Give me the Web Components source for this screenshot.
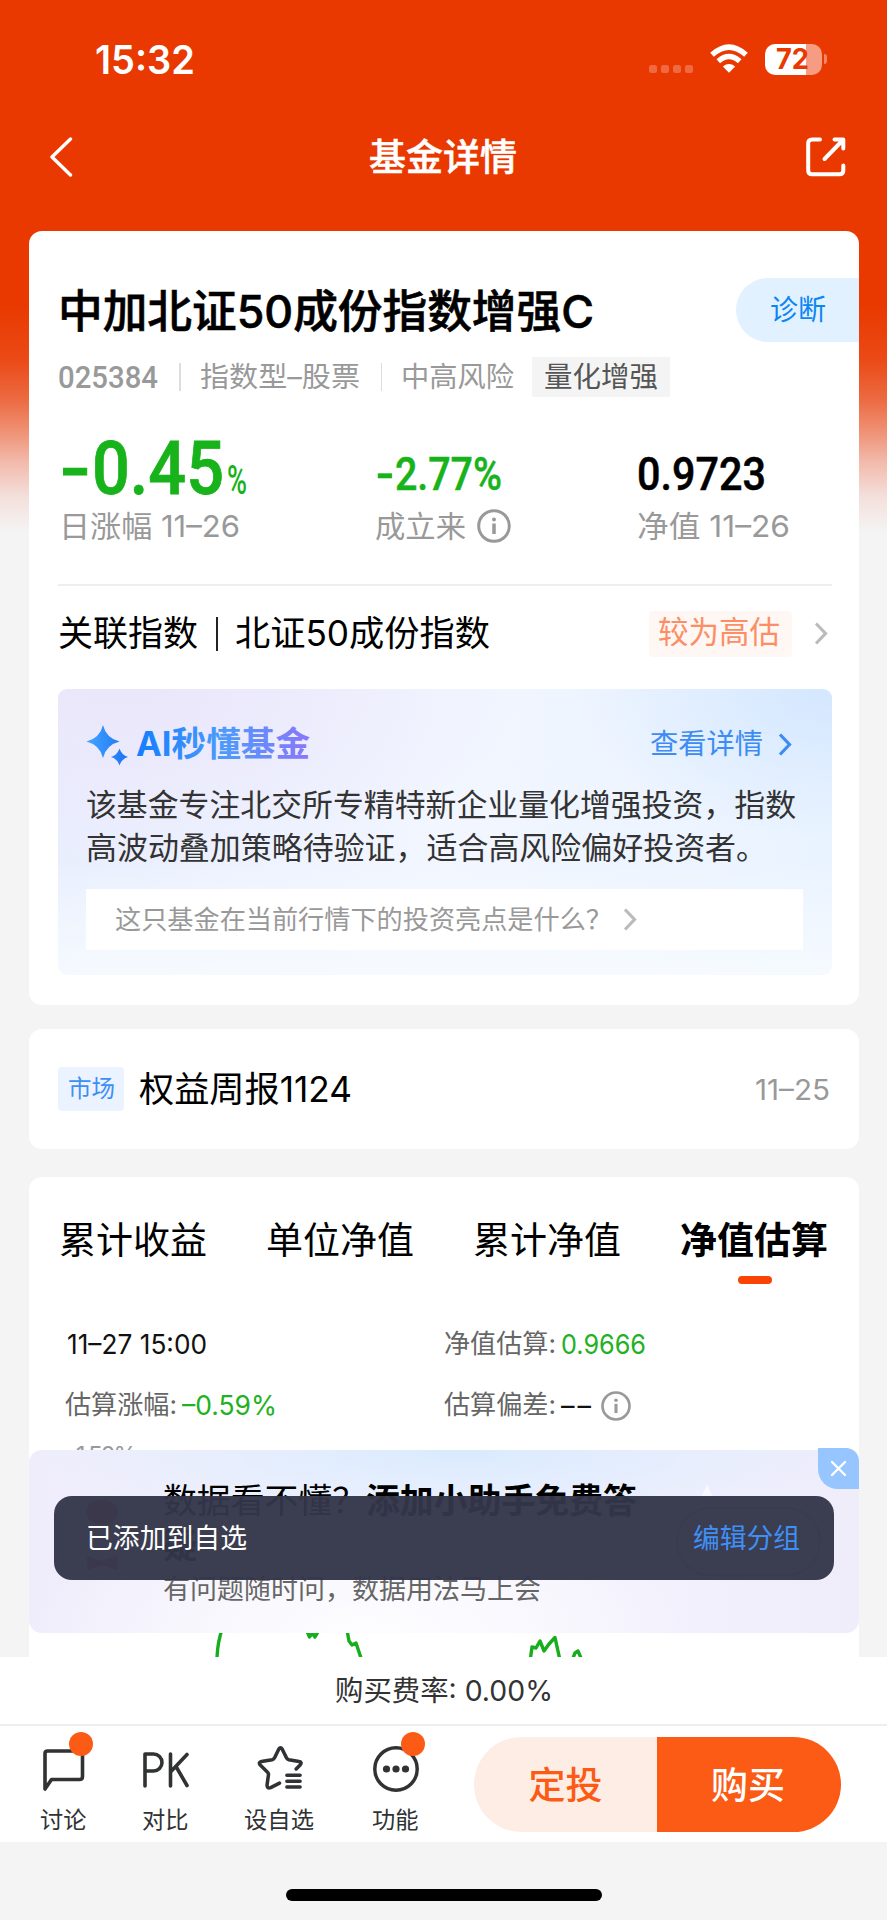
<!DOCTYPE html>
<html lang="zh-CN">
<head>
<meta charset="utf-8">
<title>基金详情</title>
<style>
html,body{margin:0;padding:0}
body{width:887px;height:1920px;overflow:hidden;background:#f4f4f4;color:#000;font-family:Inter,"Noto Sans CJK SC",sans-serif}
</style>
</head>
<body>
<fund-app></fund-app>
<script>
const define = (name, html, setup) => {
  const t = document.createElement('template');
  t.innerHTML = html;
  customElements.define(name, class extends HTMLElement {
    constructor() {
      super();
      this.attachShadow({mode: 'open'}).appendChild(t.content.cloneNode(true));
    }
    connectedCallback() { if (setup) setup(this); }
  });
};

/* Single-line label: s = size, w = advance width, g = weight, c = colour. */
define('fit-text', `<style>
:host{display:block;flex:none;white-space:nowrap;line-height:1}
span{display:inline-block;transform-origin:0 50%;vertical-align:top}
</style><span><slot></slot></span>`, el => {
  const a = n => el.getAttribute(n);
  const span = el.shadowRoot.querySelector('span');
  el.style.fontSize = a('s') + 'px';
  el.style.width = a('w') + 'px';
  if (a('g')) el.style.fontWeight = a('g');
  if (a('c')) el.style.color = a('c');
  span.style.transform = 'none';
  const natural = span.getBoundingClientRect().width;
  if (natural) span.style.transform = `scaleX(${a('w') / natural})`;
});

define('info-icon', `<style>:host{display:block;flex:none;width:34px;height:34px}svg{display:block;width:100%;height:100%}</style>
<svg viewBox="0 0 34 34"><circle cx="17" cy="17" r="15.300" fill="none" stroke="#999" stroke-width="3"/><circle cx="17" cy="10.500" r="2" fill="#999"/><path d="M17 14.500V25" stroke="#999" stroke-width="3.500"/></svg>`);

define('chevron-right', `<style>:host{display:block;flex:none;width:14px;height:23px}svg{display:block;width:100%;height:100%}</style>
<svg viewBox="0 0 14 23" fill="none" stroke="currentColor" stroke-width="3.200"><path d="M2 1.500 11.500 11.500 2 21.500"/></svg>`);

define('status-bar', `<style>
:host{display:flex;height:118px;box-sizing:border-box;padding-left:95px;align-items:center;color:#fff}
svg{display:block;flex:none}
.bat{display:flex;align-items:center;position:relative;margin-left:17px}
.body{width:57px;height:31px;border-radius:10px;background:linear-gradient(90deg,#fff 41px,#f59c82 41px);display:flex;align-items:center;padding-left:11px;box-sizing:border-box}
.cap{width:3px;height:10px;border-radius:0 4px 4px 0;background:#f28768;margin-left:2px}
</style>
<fit-text s="39" w="100" g="600">15:32</fit-text>
<svg style="margin:20px 0 0 454px" width="44" height="8" fill="#f06a41"><rect width="8" height="8" rx="2.5"/><rect x="12" width="8" height="8" rx="2.5"/><rect x="24" width="8" height="8" rx="2.5"/><rect x="36" width="8" height="8" rx="2.5"/></svg>
<svg style="margin-left:17px;margin-top:-1px" width="38" height="29" viewBox="0 0 38 29" fill="none" stroke="#fff" stroke-width="5.4"><path d="M2 10.8Q19-4.6 36 10.8"/><path d="M8.3 17.2Q19 7.8 29.7 17.2"/><path d="M12.8 22.4Q19 17.6 25.2 22.4L19 28.8Z" fill="#fff" stroke="none"/></svg>
<div class="bat"><div class="body"><fit-text s="28" w="33" g="700" c="#e93900">72</fit-text></div><div class="cap"></div></div>`);

define('nav-bar', `<style>
:host{display:flex;height:78px;align-items:center;justify-content:space-between;padding:0 41px 0 49px;color:#fff}
svg{display:block}
</style>
<svg width="25" height="40" viewBox="0 0 25 40" fill="none" stroke="#fff" stroke-width="3.4" stroke-linecap="round" stroke-linejoin="round"><path d="M21.5 2 3 20 21.5 38"/></svg>
<fit-text s="37" w="148" g="500" style="margin-left:6px;-webkit-text-stroke:.5px #fff">基金详情</fit-text>
<svg width="40" height="40" viewBox="0 0 40 40" fill="none" stroke="#fff" stroke-width="4" stroke-linecap="round" stroke-linejoin="round"><path d="M14 2.5H6Q2.2 2.5 2.2 6.3V33.5Q2.2 37.3 6 37.3H33.5Q37.3 37.3 37.3 33.5V28.5M18.5 22 36 4M28.5 2.5H37.3V11.5"/></svg>`);

define('ai-panel', `<style>
:host{display:block;height:286px;box-sizing:border-box;border-radius:9px;padding:28px 29px 0 28px;
background:linear-gradient(180deg,rgba(255,255,255,0) 60%,rgba(247,251,255,.9) 100%),radial-gradient(ellipse 260px 150px at 100% 0,#d4e7ff,rgba(212,231,255,0)),radial-gradient(ellipse 400px 190px at 8% 0,#ebe7fb 10%,rgba(235,231,251,0)),linear-gradient(90deg,#e9effe,#f2f6ff 50%,#e9f3ff)}
.head{display:flex;align-items:center;height:54px}
.head svg{flex:none;margin:0 6px 0 0}
.more{display:flex;align-items:center;margin-left:auto;color:#3c8cf4;gap:15px;padding-right:11px}
p{margin:12px 0 0;color:#333}
p fit-text{line-height:43px}
.ask{display:flex;align-items:center;background:#fff;height:61px;margin-top:20px;padding-left:29px;gap:11px;color:#bbb}
</style>
<div class="head">
<svg width="44" height="44" viewBox="0 0 44 44"><defs><linearGradient id="g"><stop stop-color="#43a5ff"/><stop offset="1" stop-color="#1b72f4"/></linearGradient></defs><path fill="url(#g)" d="M17 3Q20 16 33.500 19.500Q20 23 17 36Q14 23 .5 19.500Q14 16 17 3ZM33.500 26.500Q35.500 33 42 35Q35.500 37 33.500 43.500Q31.500 37 25 35Q31.500 33 33.500 26.500Z"/></svg>
<svg width="176" height="44" style="margin:0"><defs><linearGradient id="t"><stop stop-color="#147dff"/><stop offset=".5" stop-color="#4c9bfb"/><stop offset="1" stop-color="#8b76fa"/></linearGradient></defs><text x="0" y="34" font-size="34.500" font-weight="700" textLength="174" lengthAdjust="spacingAndGlyphs" fill="url(#t)">AI秒懂基金</text></svg>
<div class="more"><fit-text s="28" w="113">查看详情</fit-text><chevron-right></chevron-right></div></div>
<p><fit-text s="30.8" w="710">该基金专注北交所专精特新企业量化增强投资，指数</fit-text><fit-text s="30.8" w="681">高波动叠加策略待验证，适合高风险偏好投资者。</fit-text></p>
<div class="ask"><fit-text s="26" w="497" c="#999">这只基金在当前行情下的投资亮点是什么？</fit-text><chevron-right></chevron-right></div>`);

define('fund-card', `<style>
:host{display:block;box-sizing:border-box;height:774px;background:#fff;border-radius:13px;padding:47px 27px 0 29px;overflow:hidden}
.name{display:flex;align-items:center;justify-content:space-between;height:64px;margin-right:-27px}
.pill{width:123px;height:64px;border-radius:32px 0 0 32px;background:#e2f1ff;display:flex;align-items:center;justify-content:center;box-sizing:border-box}
.meta{display:flex;align-items:center;height:40px;margin-top:15px;color:#999}
i{display:block;width:1.5px;height:28px;background:#ddd}
.tag{background:#f4f4f4;color:#555;height:40px;width:138px;display:flex;align-items:center;justify-content:center;margin-left:18px}
.stats{display:grid;grid-template-columns:317px 262px auto;margin-top:37px;height:150px;border-bottom:2px solid #eee;align-content:start}
.v{height:60px;display:flex;align-items:flex-end;font-family:Roboto,sans-serif;color:#18b31b}
.v b{display:inline-block;font-weight:inherit;transform:scaleX(1.35);transform-origin:0 50%;margin-right:.14em}
.l{height:35px;display:flex;align-items:center;color:#999;margin-top:14px;gap:11px}
.idx{display:flex;align-items:center;height:94px;color:#000;padding-top:1px;box-sizing:border-box}
.val{margin-left:auto;background:#fff7f3;border-radius:4px;width:143px;height:46px;display:flex;align-items:center;justify-content:center;margin-right:22px;padding:0 3px 2px 0;box-sizing:border-box}
.idx chevron-right{color:#bbb;margin-right:4px}
ai-panel{margin-top:9px}
</style>
<div class="name"><fit-text s="45" w="536" g="500" style="padding-top:3px;-webkit-text-stroke:.6px #000">中加北证50成份指数增强C</fit-text><div class="pill"><fit-text s="28" w="56" c="#0c86f5">诊断</fit-text></div></div>
<div class="meta"><fit-text s="32" w="100" g="500" style="font-family:Roboto">025384</fit-text><i style="margin:0 19px 0 21px"></i><fit-text s="28.300" w="160">指数型–股票</fit-text><i style="margin:0 19px 0 21px"></i><fit-text s="28.300" w="113">中高风险</fit-text><div class="tag"><fit-text s="28.300" w="114">量化增强</fit-text></div></div>
<div class="stats">
<div><div class="v"><fit-text s="75" w="164" g="500" style="line-height:66px;margin:0 0 -7px 2px;-webkit-text-stroke:.8px"><b>-</b>0.45</fit-text><fit-text s="40" w="20" g="500" style="line-height:36px;margin:0 0 -5px 3px">%</fit-text></div><div class="l"><fit-text s="30" w="181" style="margin-left:1px">日涨幅 11–26</fit-text></div></div>
<div><div class="v"><fit-text s="46" w="126" g="500" style="line-height:42px;margin:0 0 -1px 1px;-webkit-text-stroke:.5px"><b>-</b>2.77%</fit-text></div><div class="l"><fit-text s="30" w="91">成立来</fit-text><info-icon></info-icon></div></div>
<div><div class="v" style="color:#000"><fit-text s="46" w="129" g="500" style="line-height:42px;margin-bottom:-1px;-webkit-text-stroke:.5px">0.9723</fit-text></div><div class="l"><fit-text s="30" w="153">净值 11–26</fit-text></div></div>
</div>
<div class="idx"><fit-text s="35.300" w="140">关联指数</fit-text><i style="background:#222;height:34px;width:2px;margin:0 17px 0 18px"></i><fit-text s="35.300" w="255">北证50成份指数</fit-text><div class="val"><fit-text s="30.500" w="122" c="#fc8e66">较为高估</fit-text></div><chevron-right></chevron-right></div>
<ai-panel></ai-panel>`);

define('report-card', `<style>
:host{display:flex;align-items:center;box-sizing:border-box;height:120px;background:#fff;border-radius:13px;padding:0 29px;margin-top:24px}
.tag{display:flex;align-items:center;justify-content:center;width:66px;height:44px;background:#eaf3ff;border-radius:4px;margin-right:15px}
.date{margin-left:auto}
</style><div class="tag"><fit-text s="23.300" w="47" c="#3d8ff5">市场</fit-text></div><fit-text s="35.300" w="213" style="padding-top:2px">权益周报1124</fit-text><fit-text class="date" s="28" w="75" c="#999" style="padding-top:1px">11–25</fit-text>`);

define('promo-banner', `<style>
:host{display:block;box-sizing:border-box;width:830px;height:183px;border-radius:13px;position:relative;padding:28px 0 0 134px;
background:radial-gradient(ellipse 430px 90px at 52% 0,#d9eafe,rgba(217,234,254,0)),radial-gradient(ellipse 330px 130px at 40% 100%,#fdfdff,rgba(253,253,255,0)),linear-gradient(90deg,#efedfb,#f6f5fe 50%,#f0edfb)}
.ln{display:flex;align-items:center;height:45px}
.close{position:absolute;right:0;top:-2px;width:41px;height:41px;border-radius:0 13px 0 20px;background:#97c5ff;display:flex;align-items:center;justify-content:center}
.bot{position:absolute;left:54px;top:48px}
.btn{position:absolute;right:38px;top:57px;width:145px;height:69px;box-sizing:border-box;border:2px solid #c9bdd0;border-radius:35px}
.tri{position:absolute;left:672px;top:34px;border:6px solid transparent;border-top:0;border-bottom:14px solid #f8f9ff}
</style>
<div class="ln"><fit-text s="33.600" w="203">数据看不懂？</fit-text><fit-text s="33.600" w="271" g="700">添加小助手免费答</fit-text></div>
<div class="ln"><fit-text s="33.600" w="34" g="700">疑</fit-text></div>
<div class="ln" style="margin-top:-1px"><fit-text s="27" w="378" c="#666">有问题随时问，数据用法马上会</fit-text></div>
<svg class="bot" width="38" height="72"><ellipse cx="19" cy="14" rx="16" ry="12" fill="#d77c74"/><rect x="5" y="26" width="28" height="30" rx="13" fill="#eee"/><path d="M4 58l15 5 15-5v14l-15-5-15 5z" fill="#d77c74"/></svg>
<div class="btn"></div><div class="tri"></div>
<div class="close"><svg width="17" height="17" fill="none" stroke="#fff" stroke-width="2.4" stroke-linecap="round"><path d="M2 2 15 15M15 2 2 15"/></svg></div>`);

define('valuation-card', `<style>
:host{display:block;box-sizing:border-box;height:480px;background:#fff;border-radius:13px 13px 0 0;padding:31px 29px 0 30px;margin-top:28px;position:relative}
.tabs{display:flex;justify-content:space-between;margin-right:2px}
.tab{display:flex;flex-direction:column;align-items:center}
.tab fit-text{line-height:66px}
.bar{width:34px;height:8px;border-radius:4px;background:#fa4306;margin:2px 0 0 2px}
.grid{display:grid;grid-template-columns:379px auto;grid-auto-rows:61px;padding-left:6px;margin-top:30px;align-items:center;color:#666}
.grid div{display:flex;align-items:center}
.chart{display:block;margin:6px 0 0}
promo-banner{position:absolute;left:0;top:273px}
</style>
<div class="tabs"><div class="tab"><fit-text s="37.200" w="148">累计收益</fit-text></div><div class="tab"><fit-text s="37.200" w="148">单位净值</fit-text></div><div class="tab"><fit-text s="37.200" w="148">累计净值</fit-text></div><div class="tab"><fit-text s="37.200" w="148" g="700">净值估算</fit-text><div class="bar"></div></div></div>
<div class="grid">
<div><fit-text s="27" w="140" c="#111" style="margin-left:2px">11–27 15:00</fit-text></div>
<div><fit-text s="26.200" w="112">净值估算:</fit-text><fit-text s="27" w="85" c="#22b122" style="margin-left:5px">0.9666</fit-text></div>
<div><fit-text s="26.200" w="112">估算涨幅:</fit-text><fit-text s="27" w="95" c="#22b122" style="margin-left:5px">–0.59%</fit-text></div>
<div><fit-text s="26.200" w="112">估算偏差:</fit-text><fit-text s="27" w="33" c="#111" style="margin-left:5px;letter-spacing:3px">––</fit-text><info-icon style="width:30px;height:30px;margin-left:7px"></info-icon></div>
</div>
<svg class="chart" width="770" height="215" viewBox="59 1442 770 215"><text x="66" y="1463.500" font-size="24" fill="#999" textLength="71">–1.50%</text><g fill="none" stroke="#17ad1c" stroke-width="3.400" stroke-linejoin="round"><path d="M222.500 1628Q217.500 1642 217 1658M307 1631 309.500 1637 312.500 1633 315 1637 319 1630M347 1630 349 1641 352 1645 356 1643 361 1658M530.500 1658 532 1647 536 1648 540 1641 544 1651 549 1644 555 1637.500 559.500 1658M573 1658 575 1653 578 1651 581 1658"/></g></svg>
<promo-banner></promo-banner>`);

define('toast-message', `<style>
:host{display:flex;align-items:center;justify-content:space-between;box-sizing:border-box;width:780px;height:84px;border-radius:18px;background:rgba(51,53,73,.96);padding:1px 34px 0 32px;position:absolute;left:54px;top:1496px}
</style><fit-text s="27" w="161" c="#fff">已添加到自选</fit-text><fit-text s="27" w="107" c="#3f8ff5">编辑分组</fit-text>`);

define('tool-item', `<style>
:host{display:flex;flex-direction:column;align-items:center;position:relative;height:115px;flex:none}
.i{height:76px;width:50px;display:flex;align-items:center;justify-content:center;margin-bottom:7px}
.dot{display:none;position:absolute;left:50%;top:6px;width:24px;height:24px;border-radius:50%;background:#fb5b14;margin-left:5.5px}
:host([dot]) .dot{display:block}
</style><div class="i"><slot name="icon"></slot></div><slot></slot><div class="dot"></div>`);

define('action-bar', `<style>
:host{display:block;background:#fff;height:185px}
.rate{display:flex;align-items:center;justify-content:center;height:69px;border-bottom:2px solid #eee;box-sizing:border-box}
.row{display:flex;height:116px;padding:0 46px 0 40px}
svg{display:block}
.buy{display:flex;margin:11px 0 0 auto;height:95px;width:367px;border-radius:48px;overflow:hidden}
.buy div{width:183px;display:flex;align-items:center;justify-content:center;background:#fdede5;padding-top:2px;box-sizing:border-box}
.buy div+div{background:#fb5b14;width:184px;padding-right:2px}
</style>
<div class="rate"><fit-text s="28" w="218" c="#333">购买费率: 0.00%</fit-text></div>
<div class="row">
<tool-item dot style="width:47px"><svg slot="icon" style="margin-top:11px" width="42" height="44" viewBox="0 0 42 44" fill="none" stroke="#303233" stroke-width="3.600" stroke-linejoin="round"><path d="M2 41V5.500Q2 3 4.500 3H37Q39.500 3 39.500 5.500V28.500Q39.500 31.500 36.500 31.500H8.500Z"/></svg><fit-text s="23.200" w="46.500" c="#303233">讨论</fit-text></tool-item>
<tool-item style="width:47px;margin-left:55px"><svg slot="icon" style="margin-top:12px" width="50" height="38" viewBox="0 0 50 38" fill="none" stroke="#303233" stroke-width="3.600" stroke-linecap="round" stroke-linejoin="round"><path d="M4 35V3H12.500A8.400 8.400 0 0 1 12.500 20H4M29.500 3V35M46 3.500 29.500 21M35 15.500 46 34.500"/></svg><fit-text s="23.200" w="46.500" c="#303233">对比</fit-text></tool-item>
<tool-item style="width:70px;margin-left:55px"><svg slot="icon" style="margin:8px 0 0 3px" width="48" height="46" viewBox="0 0 48 46" fill="none" stroke="#303233" stroke-width="3.600" stroke-linecap="round" stroke-linejoin="round"><path d="M40 24 44 20Q46.500 16.800 43 16.300L32.500 14.500Q31 14.200 30.300 13L25.800 3.800Q24 .8 22.200 3.800L17.700 13Q17 14.200 15.500 14.500L4.500 16.300Q1 17 3.300 20L11 27.500Q12 28.500 11.700 30L10.300 40Q10 44.500 14 43L23 38.500M30.500 30.500H44M30.500 36.500H44M30.500 42.500H44"/></svg><fit-text s="23.200" w="70" c="#303233">设自选</fit-text></tool-item>
<tool-item dot style="width:47px;margin-left:58px"><svg slot="icon" style="margin-top:10px" width="46" height="46" viewBox="0 0 46 46"><circle cx="23" cy="23" r="21.200" fill="none" stroke="#303233" stroke-width="3.500"/><g fill="#303233"><circle cx="13.500" cy="23" r="3.600"/><circle cx="23" cy="23" r="3.600"/><circle cx="32.500" cy="23" r="3.600"/></g></svg><fit-text s="23.200" w="46.500" c="#303233">功能</fit-text></tool-item>
<div class="buy"><div><fit-text s="37" w="74" g="500" c="#fb5b14">定投</fit-text></div><div><fit-text s="37" w="74" g="500" c="#fff">购买</fit-text></div></div>
</div>`);

define('fund-app', `<style>
:host{display:flex;flex-direction:column;width:887px;height:1920px;position:relative;background:#f4f4f4}
main{height:1657px;box-sizing:border-box;overflow:hidden;background:linear-gradient(180deg,#e93900 305px,#eb4a17 360px,#ec6b43 400px,#ef8f72 430px,#f2bbad 463px,#f3e0db 497px,#f4f4f4 532px)}
.content{padding:35px 28px 0 29px}
.home{width:316px;height:12px;border-radius:6px;background:#000;margin:47px auto 0;position:relative;left:.5px}
</style>
<main><status-bar></status-bar><nav-bar></nav-bar><div class="content"><fund-card></fund-card><report-card></report-card><valuation-card></valuation-card></div></main>
<action-bar></action-bar><div class="home"></div><toast-message></toast-message>`);
</script>
</body>
</html>
